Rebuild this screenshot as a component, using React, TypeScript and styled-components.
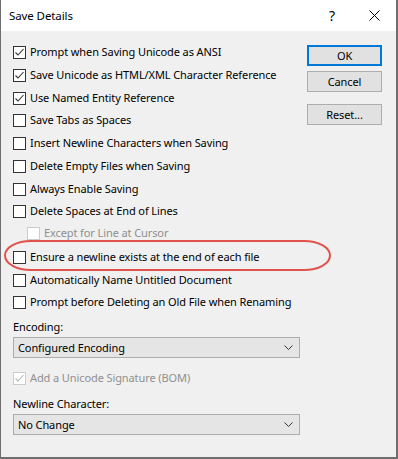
import React from "react";
import styled, { createGlobalStyle } from "styled-components";

const GlobalStyle = createGlobalStyle`
  html, body {
    margin: 0;
    padding: 0;
    background: #f0f0f0;
  }
  body {
    font-family: "Noto Sans", "Liberation Sans", sans-serif;
    font-size: 11px;
    letter-spacing: -0.1px;
    color: #000;
  }
`;

const Window = styled.div`
  width: 398px;
  height: 459px;
  box-sizing: border-box;
  display: flex;
  flex-direction: column;
  border-left: 1px solid #6e6e6e;
  border-right: 2px solid #6e6e6e;
  border-bottom: 2px solid #6e6e6e;
  background: #f0f0f0;
`;

const TitleBar = styled.div`
  height: 31px;
  flex: none;
  background: #fff;
  display: flex;
  align-items: center;
  padding-left: 8px;
`;

const Title = styled.div`
  font-size: 11.5px;
  line-height: 16px;
`;

const Help = styled.div`
  margin-left: auto;
  font-size: 14px;
  line-height: 16px;
  width: 12px;
  text-align: center;
`;

const Close = styled.svg`
  margin-left: 31px;
  margin-right: 16px;
  display: block;
`;

const Body = styled.div`
  position: relative;
  flex: 1;
  display: flex;
  align-items: flex-start;
  padding-left: 12px;
  gap: 7px;
`;

const Options = styled.div`
  width: 287px;
  padding-top: 13px;
  display: flex;
  flex-direction: column;
`;

const Row = styled.label<{ $mt: number; $indent?: boolean }>`
  display: flex;
  align-items: center;
  height: 16px;
  margin-top: ${(p) => p.$mt}px;
  padding-left: ${(p) => (p.$indent ? 14 : 0)}px;
  white-space: nowrap;
  line-height: 16px;
`;

const Box = styled.span<{ $disabled?: boolean }>`
  width: 13px;
  height: 13px;
  box-sizing: border-box;
  flex: none;
  border: 1px solid ${(p) => (p.$disabled ? "#cccccc" : "#333333")};
  background: #fff;
  margin-right: 4px;
  display: flex;
  align-items: center;
  justify-content: center;
`;

const RowText = styled.span<{ $disabled?: boolean }>`
  color: ${(p) => (p.$disabled ? "#8f8f8f" : "#000")};
`;

const FieldLabel = styled.div<{ $mt: number }>`
  margin-top: ${(p) => p.$mt}px;
  line-height: 16px;
  height: 16px;
`;

const Select = styled.div`
  margin-top: 2px;
  height: 21px;
  box-sizing: border-box;
  border: 1px solid #adadad;
  background: #e5e5e5;
  display: flex;
  align-items: center;
  padding-left: 4px;
  padding-right: 6px;
`;

const SelectText = styled.span`
  flex: 1;
`;

const Buttons = styled.div`
  width: 75px;
  padding-top: 14px;
  display: flex;
  flex-direction: column;
`;

const Button = styled.button<{ $primary?: boolean; $mt: number }>`
  width: 75px;
  height: 21px;
  margin-top: ${(p) => p.$mt}px;
  box-sizing: border-box;
  background: #e1e1e1;
  border: ${(p) => (p.$primary ? "2px solid #0078d7" : "1px solid #adadad")};
  font: inherit;
  letter-spacing: inherit;
  color: #000;
  padding: 0;
  line-height: 16px;
`;

const Highlight = styled.svg`
  position: absolute;
  left: 3px;
  top: 209px;
  overflow: visible;
  pointer-events: none;
`;

function Check({ disabled }: { disabled?: boolean }) {
  return (
    <svg width="11" height="11" viewBox="0 0 11 11">
      <polyline
        points="1.5,5.5 4,8 9.5,2"
        fill="none"
        stroke={disabled ? "#b4b4b4" : "#333"}
        strokeWidth="1.1"
      />
    </svg>
  );
}

function Option(props: {
  text: string;
  checked?: boolean;
  disabled?: boolean;
  indent?: boolean;
  mt: number;
}) {
  return (
    <Row $mt={props.mt} $indent={props.indent}>
      <Box $disabled={props.disabled}>
        {props.checked && <Check disabled={props.disabled} />}
      </Box>
      <RowText $disabled={props.disabled}>{props.text}</RowText>
    </Row>
  );
}

function Chevron() {
  return (
    <svg width="9" height="5" viewBox="0 0 9 5">
      <polyline points="0.5,0.5 4.5,4.5 8.5,0.5" fill="none" stroke="#333" strokeWidth="1" />
    </svg>
  );
}

const options = [
  { text: "Prompt when Saving Unicode as ANSI", checked: true, mt: 0 },
  { text: "Save Unicode as HTML/XML Character Reference", checked: true, mt: 7 },
  { text: "Use Named Entity Reference", checked: true, mt: 7 },
  { text: "Save Tabs as Spaces", mt: 6 },
  { text: "Insert Newline Characters when Saving", mt: 7 },
  { text: "Delete Empty Files when Saving", mt: 7 },
  { text: "Always Enable Saving", mt: 7 },
  { text: "Delete Spaces at End of Lines", mt: 6 },
  { text: "Except for Line at Cursor", disabled: true, indent: true, mt: 6 },
  { text: "Ensure a newline exists at the end of each file", mt: 8 },
  { text: "Automatically Name Untitled Document", mt: 7 },
  { text: "Prompt before Deleting an Old File when Renaming", mt: 6 },
];

export default function App() {
  return (
    <>
      <GlobalStyle />
      <Window>
        <TitleBar>
          <Title>Save Details</Title>
          <Help>?</Help>
          <Close width="11" height="11" viewBox="0 0 11 11">
            <path d="M0.5 0.5 L10.5 10.5 M10.5 0.5 L0.5 10.5" stroke="#000" strokeWidth="1" />
          </Close>
        </TitleBar>
        <Body>
          <Options>
            {options.map((o) => (
              <Option key={o.text} {...o} />
            ))}
            <FieldLabel $mt={9}>Encoding:</FieldLabel>
            <Select>
              <SelectText>Configured Encoding</SelectText>
              <Chevron />
            </Select>
            <Option text="Add a Unicode Signature (BOM)" checked disabled mt={12} />
            <FieldLabel $mt={10}>Newline Character:</FieldLabel>
            <Select>
              <SelectText>No Change</SelectText>
              <Chevron />
            </Select>
          </Options>
          <Buttons>
            <Button $primary $mt={0}>OK</Button>
            <Button $mt={5}>Cancel</Button>
            <Button $mt={12}>Reset...</Button>
          </Buttons>
          <Highlight width="327" height="31" viewBox="0 0 327 31">
            <rect
              x="1"
              y="1"
              width="325"
              height="29"
              rx="26"
              ry="14.5"
              fill="none"
              stroke="#e0524c"
              strokeWidth="2"
            />
          </Highlight>
        </Body>
      </Window>
    </>
  );
}
